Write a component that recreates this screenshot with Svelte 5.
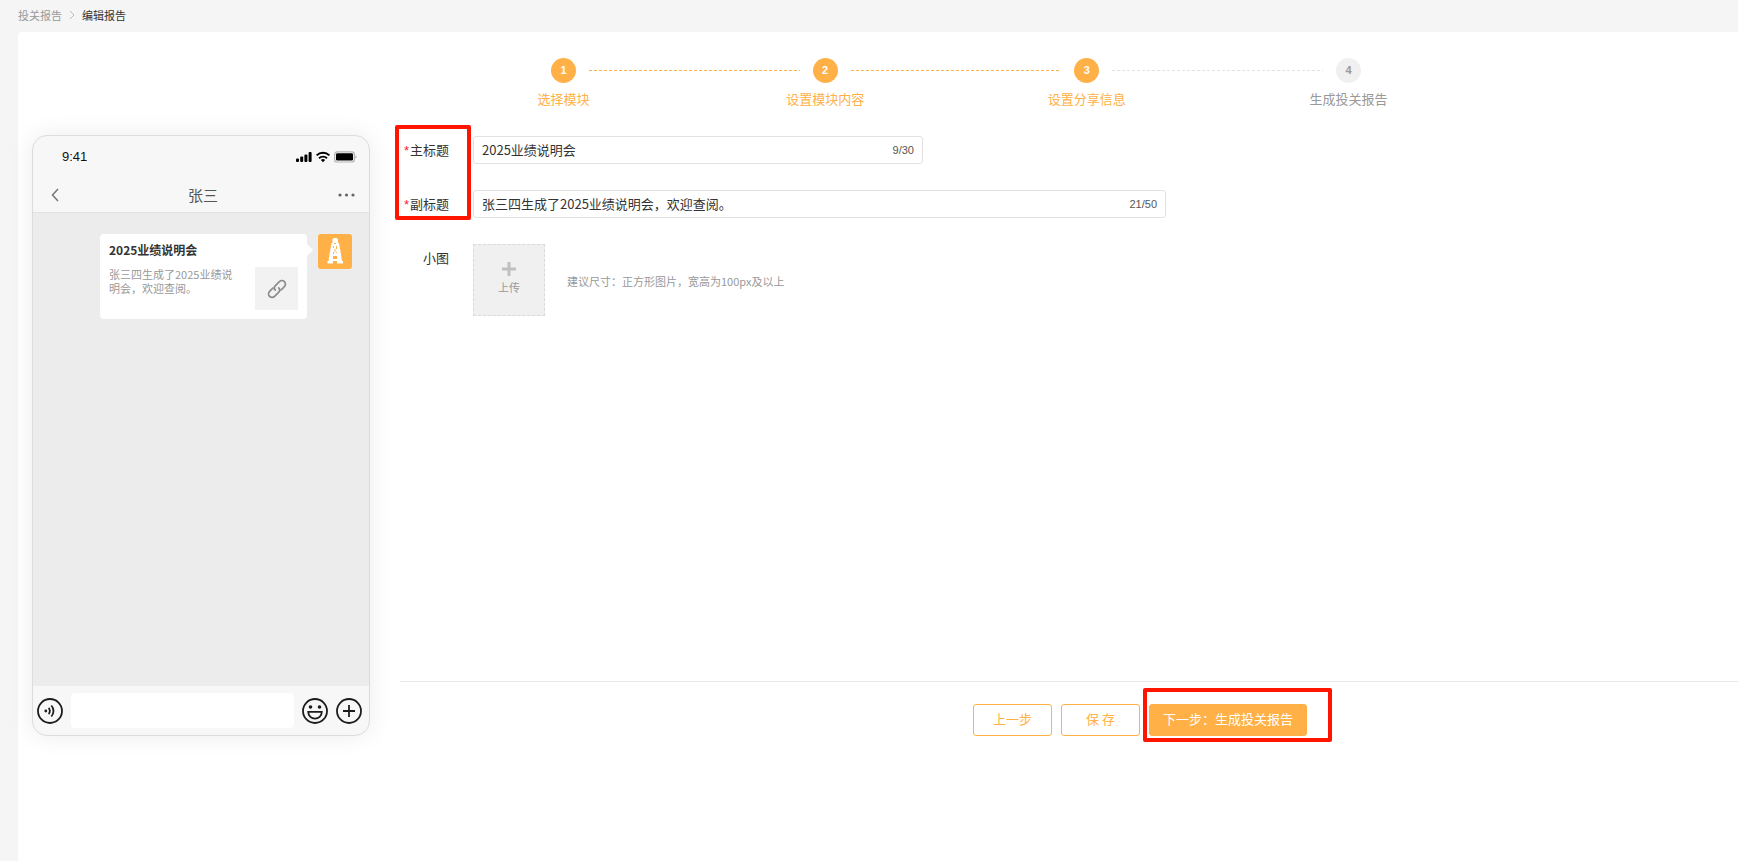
<script>
  let title = $state('2025业绩说明会');
  let subtitle = $state('张三四生成了2025业绩说明会\uFF0C欢迎查阅。');
  let reply = $state('');

  const TITLE_MAX = 30;
  const SUBTITLE_MAX = 50;
  const current = 3;

  const steps = ['选择模块', '设置模块内容', '设置分享信息', '生成投关报告'];
</script>

<div class="page" lang="zh-CN">
  <nav class="breadcrumb">
    <a href="#reports">投关报告</a>
    <svg width="6" height="10" viewBox="0 0 6 10"><path d="M1 1l4 4-4 4" fill="none" stroke="#bbb" /></svg>
    <span>编辑报告</span>
  </nav>

  <main class="panel">
    <ol class="steps">
      {#each steps as label, i}
        {#if i > 0}
          <li class="line" class:done={i < current} aria-hidden="true"></li>
        {/if}
        <li class="step" class:done={i < current}>
          <span class="num">{i + 1}</span>
          <span class="step-label">{label}</span>
        </li>
      {/each}
    </ol>

    <div class="workspace">
      <section class="phone">
        <div class="status-bar">
          <span>9:41</span>
          <svg width="61" height="12" viewBox="0 0 61 12">
            <rect x="0" y="7.500" width="3" height="3.500" rx="1" />
            <rect x="4.200" y="5.500" width="3" height="5.500" rx="1" />
            <rect x="8.400" y="3.500" width="3" height="7.500" rx="1" />
            <rect x="12.600" y="1" width="3" height="10" rx="1" />
            <g fill="none" stroke="#000" stroke-width="1.9">
              <path d="M20.6 4.4a9.2 9.2 0 0 1 12.8 0" />
              <path d="M23 7.2a5.8 5.8 0 0 1 8 0" />
            </g>
            <path d="M24.9 9a3.2 3.2 0 0 1 4.2 0L27 11.2z" />
            <rect x="38.6" y="0.8" width="19.8" height="10.200" rx="2.6" fill="#f7f7f7" stroke="#b5b5b5" stroke-width="1.2" />
            <rect x="40" y="2.200" width="17" height="7.400" rx="1.4" />
            <path d="M59.4 4.200c1.6.6 1.6 2.800 0 3.400z" fill="#b5b5b5" />
          </svg>
        </div>
        <header class="chat-head">
          <svg width="8" height="14" viewBox="0 0 8 14"><path d="M7 1L1.500 7 7 13" fill="none" stroke="#777" stroke-width="1.5" /></svg>
          <h2>张三</h2>
          <svg width="17" height="4" viewBox="0 0 17 4" fill="#666">
            <circle cx="2" cy="2" r="1.6" /><circle cx="8.500" cy="2" r="1.6" /><circle cx="15" cy="2" r="1.6" />
          </svg>
        </header>

        <div class="chat-body">
          <article class="card">
            <h3>{title}</h3>
            <div class="card-row">
              <p>{subtitle}</p>
              <div class="thumb">
                <svg width="20" height="20" viewBox="0 0 20 20" fill="none" stroke="#8c8c8c" stroke-width="1.700" stroke-linecap="round">
                  <path d="M8.300 11.200C6.800 9.700 7 8 8.200 6.800L12.400 2.600a3.500 3.500 0 0 1 5 5L14.200 10.800" />
                  <path d="M11.700 8.800C13.200 10.300 13 12 11.800 13.200L7.600 17.400a3.500 3.500 0 0 1-5-5L5.800 9.200" />
                </svg>
              </div>
            </div>
          </article>
          <div class="avatar">
            <svg width="34" height="35" viewBox="0 0 34 35" fill="#fff">
              <path d="M15 4h4v1h1v4h1l1 6 1 5 1 7h1v2.500h-6V27h-4v2.500H9.500V27h1l1-7 1-5 1-6h1V5h1z" />
              <g fill="#ffb046">
                <path d="M16 9h2v1h-2zM15 12h1v2h-1zM18 12h1v3h-1zM16.500 15h1v3h-1zM15 18h1v2h-1zM18 18h1v1h-1zM15 22h4v3h-4z" />
              </g>
            </svg>
          </div>
        </div>

        <footer class="chat-foot">
          <svg width="26" height="26" viewBox="0 0 26 26" fill="none" stroke="#1c1c1c" stroke-width="1.800">
            <circle cx="13" cy="13" r="12" />
            <circle cx="8.800" cy="13" r="1.400" fill="#1c1c1c" stroke="none" />
            <path d="M11.600 10a4.200 4.200 0 0 1 0 6M14.300 7.500a8 8 0 0 1 0 11" />
          </svg>
          <input class="reply" type="text" aria-label="回复" bind:value={reply} />
          <svg width="26" height="26" viewBox="0 0 26 26" fill="none" stroke="#1c1c1c" stroke-width="1.800">
            <circle cx="13" cy="13" r="12" />
            <circle cx="8.500" cy="9" r="1.800" fill="#1c1c1c" stroke="none" />
            <circle cx="17.500" cy="9" r="1.800" fill="#1c1c1c" stroke="none" />
            <path d="M6.200 13.800h13.600c0 9-13.600 9-13.600 0z" />
          </svg>
          <svg width="26" height="26" viewBox="0 0 26 26" fill="none" stroke="#1c1c1c" stroke-width="1.800">
            <circle cx="13" cy="13" r="12" />
            <path d="M13 7v12M7 13h12" />
          </svg>
        </footer>
      </section>

      <section class="editor">
        <form id="share-form" onsubmit={(e) => e.preventDefault()}>
          <div class="required-rows">
            <div class="row">
              <label for="title"><i>*</i>主标题</label>
              <div class="field short">
                <input id="title" type="text" maxlength={TITLE_MAX} bind:value={title} />
                <span>{title.length}/{TITLE_MAX}</span>
              </div>
            </div>
            <div class="row">
              <label for="subtitle"><i>*</i>副标题</label>
              <div class="field">
                <input id="subtitle" type="text" maxlength={SUBTITLE_MAX} bind:value={subtitle} />
                <span>{subtitle.length}/{SUBTITLE_MAX}</span>
              </div>
            </div>
            <div class="mark mark-labels"></div>
          </div>
          <div class="row">
            <label for="upload">小图</label>
            <button id="upload" class="upload" type="button">
              <svg width="14" height="14" viewBox="0 0 14 14"><path d="M7 0v14M0 7h14" stroke="#bfbfbf" stroke-width="3" /></svg>
              上传
            </button>
            <p class="hint">建议尺寸&#xFF1A;正方形图片&#xFF0C;宽高为100px及以上</p>
          </div>
        </form>

        <div class="actions">
          <button class="btn" type="button">上一步</button>
          <button class="btn" type="button">保 存</button>
          <div class="next">
            <button class="btn primary" type="submit" form="share-form">下一步&#xFF1A;生成投关报告</button>
            <div class="mark mark-next"></div>
          </div>
        </div>
      </section>
    </div>
  </main>
</div>

<style>
  :global(body) { margin: 0; background: #f5f5f5; }

  .page {
    --accent: #ffb046;
    --line: #e2e2e2;
    --muted: #999;
    min-height: 100vh; box-sizing: border-box; overflow: hidden;
    display: flex; flex-direction: column; padding-left: 18px;
    font-family: "Noto Sans CJK SC", sans-serif; font-size: 13px; line-height: 20px; color: #333;
  }
  .page * { box-sizing: border-box; }
  button, input { font: inherit; color: inherit; }
  h2, h3, p, ol { margin: 0; padding: 0; }
  svg { display: block; flex: none; }

  .breadcrumb { display: flex; align-items: center; gap: 7px; height: 32px; padding-bottom: 2px; font-size: 11px; }
  .breadcrumb a { color: var(--muted); text-decoration: none; }

  /* the panel runs on past the right edge of the window */
  .panel { flex: 1; margin-right: -156px; padding: 26px 14px; background: #fff; border-radius: 4px 0 0 0; }

  .steps { display: flex; list-style: none; max-width: 810px; margin: 0 auto; height: 77px; }
  .step { width: 25px; display: flex; flex-direction: column; align-items: center; gap: 6px; color: var(--muted); }
  .step.done { color: var(--accent); }
  .num {
    width: 25px; height: 25px; border-radius: 50%; background: #f0f0f0; text-align: center;
    font: bold 11px/25px "Liberation Sans", sans-serif; color: var(--muted);
  }
  .done .num { background: var(--accent); color: #fff; }
  .step-label { white-space: nowrap; }
  .line { flex: 1; height: 1px; margin: 12px 13px 0; background: repeating-linear-gradient(90deg, var(--line) 0 3px, transparent 3px 5px); }
  .line.done { background: repeating-linear-gradient(90deg, var(--accent) 0 3px, transparent 3px 5px); }

  .workspace { display: flex; align-items: flex-start; gap: 30px; }

  .phone {
    flex: none; width: 338px; height: 601px; display: flex; flex-direction: column;
    border: 1px solid #dcdcdc; border-radius: 15px; background: #f7f7f7; overflow: hidden;
    box-shadow: 0 0 24px rgba(0, 0, 0, 0.08);
  }
  .status-bar {
    display: flex; justify-content: space-between; align-items: center; height: 41px;
    padding: 0 12px 0 29px; font-family: "Liberation Sans", sans-serif; color: #111;
  }
  .chat-head { display: grid; grid-template-columns: 1fr auto 1fr; align-items: center; height: 35px; padding: 0 14px 0 18px; }
  .chat-head h2 { font-size: 15px; font-weight: 400; line-height: 20px; color: #555; }
  .chat-head svg:last-child { justify-self: end; }
  .chat-body {
    flex: 1; display: flex; align-items: flex-start; justify-content: flex-end; gap: 11px;
    padding: 21px 17px; background: #ececec; border-top: 1px solid #e2e2e2;
  }
  .card { position: relative; width: 207px; height: 85px; padding: 6px 9px; border-radius: 4px; background: #fff; }
  .card::after {
    content: ''; position: absolute; left: 100%; top: 10px;
    border: 6px solid transparent; border-left-color: #fff; border-right: 0;
  }
  .card h3 { font-size: 12px; line-height: 20px; font-weight: 700; }
  .card-row { display: flex; justify-content: space-between; padding-top: 7px; }
  .card p { width: 126px; font-size: 11px; line-height: 14px; color: var(--muted); }
  .thumb { width: 43px; height: 43px; display: grid; place-items: center; background: #f2f2f2; }
  .avatar { border-radius: 3px; overflow: hidden; background: var(--accent); }
  .chat-foot { display: flex; align-items: center; gap: 8px; height: 49px; padding: 0 7px 0 4px; }
  .reply { flex: 1; min-width: 0; height: 35px; border: 0; border-radius: 4px; background: #fff; }

  .editor { flex: 1; min-width: 0; }
  form { min-height: 546px; padding-top: 1px; }
  .required-rows { position: relative; }
  .row { display: flex; align-items: flex-start; margin-bottom: 26px; }
  .row label { flex: none; width: 49px; margin-right: 24px; line-height: 28px; text-align: right; white-space: nowrap; }
  .row label i { margin-right: 1px; font: normal 13px "Liberation Sans", sans-serif; color: #f5222d; }
  .field { display: flex; align-items: center; width: 693px; height: 28px; padding: 0 8px; border: 1px solid var(--line); border-radius: 3px; }
  .field.short { width: 450px; }
  .field input { flex: 1; min-width: 0; padding: 0; border: 0; outline: 0; background: none; }
  .field span { font: 11px/26px "Liberation Sans", sans-serif; color: #555; }

  .upload {
    display: flex; flex-direction: column; align-items: center; justify-content: center; gap: 2px;
    width: 72px; height: 72px; padding: 0 0 2px; border: 1px dashed #d9d9d9; background: #f0f0f0;
    font-size: 11px; line-height: 18px; color: var(--muted);
  }
  .hint { margin-left: 22px; font-size: 11px; line-height: 74px; color: var(--muted); }

  .actions { display: flex; justify-content: center; gap: 9px; padding-top: 22px; border-top: 1px solid #e8e8e8; }
  .btn {
    min-width: 79px; height: 32px; padding: 0 13px 2px; border: 1px solid var(--accent); border-radius: 3px;
    background: #fff; color: var(--accent); line-height: 28px; cursor: pointer;
  }
  .btn.primary { background: var(--accent); color: #fff; }
  .next { position: relative; }

  .mark { position: absolute; border: 4px solid #ff1400; border-radius: 2px; pointer-events: none; }
  .mark-labels { left: -5px; top: -11px; width: 76px; height: 95px; }
  .mark-next { inset: -16px -25px -6px -6px; }
</style>
